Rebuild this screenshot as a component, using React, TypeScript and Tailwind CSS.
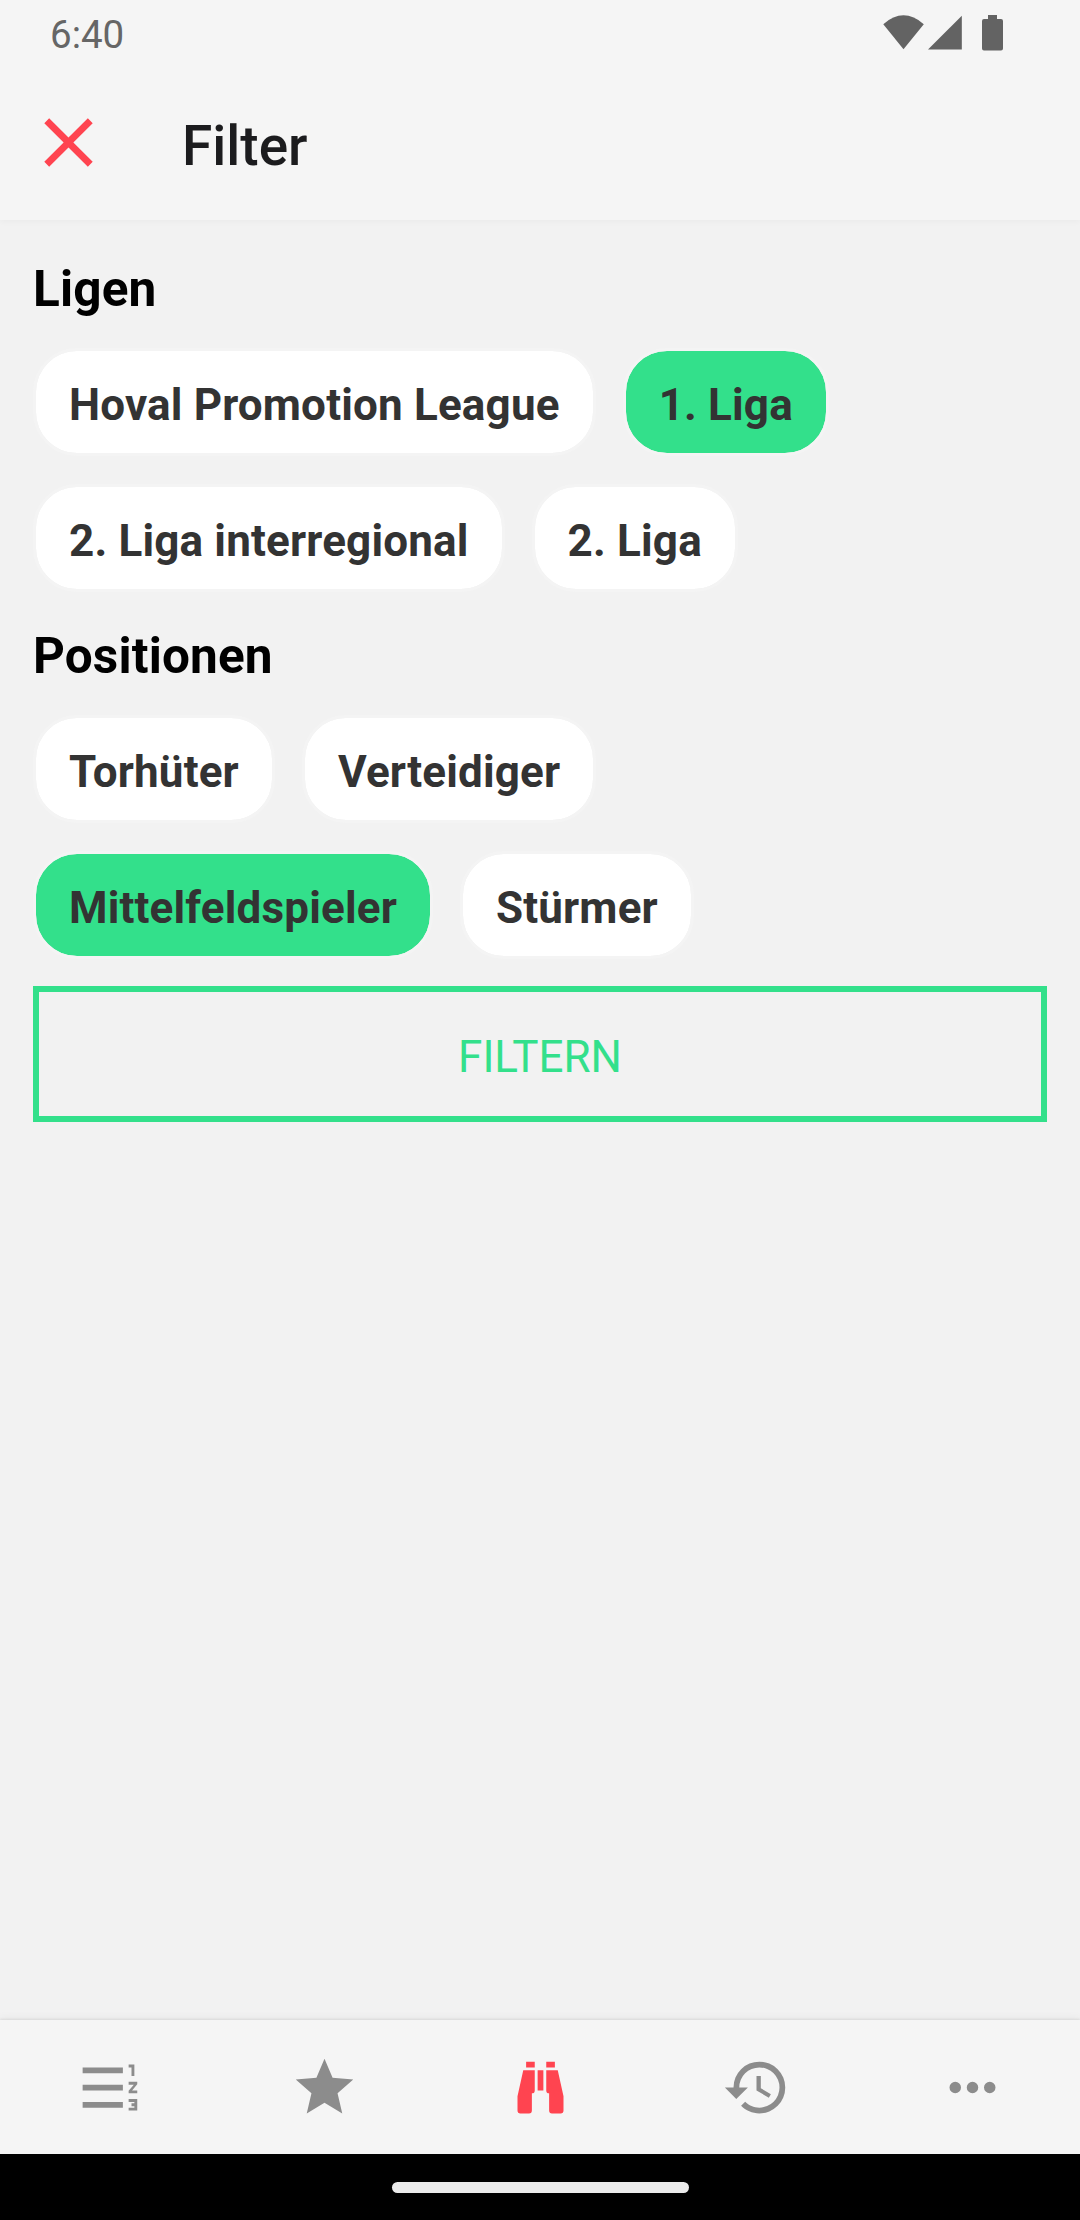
import React from "react";

type ChipProps = { label: string; selected?: boolean };

function Chip({ label, selected = false }: ChipProps) {
  return (
    <button
      className={
        "h-[108px] shrink-0 whitespace-nowrap rounded-[44px] border-[3px] border-[#f4f4f4] bg-clip-padding px-[33px] pt-[28px] pb-[22px] text-[44px] leading-[52px] font-bold tracking-[0.17px] text-[#333333] " +
        (selected ? "bg-[#33e08b]" : "bg-white")
      }
    >
      {label}
    </button>
  );
}

function Section({ title, rows }: { title: string; rows: ChipProps[][] }) {
  return (
    <section>
      <h2 className="text-[49.5px] leading-[58px] font-bold tracking-[0.17px] text-black">{title}</h2>
      <div className="mt-[30px] flex flex-col gap-7">
        {rows.map((row, i) => (
          <div key={i} className="flex gap-[27px]">
            {row.map((chip) => (
              <Chip key={chip.label} {...chip} />
            ))}
          </div>
        ))}
      </div>
    </section>
  );
}

const tabs = [
  {
    name: "Tabelle",
    d: "M19 17h2v.5h-1v1h1v.5h-2v1h3v-4h-3v1zm1-9h1V4h-2v1h1v3zm-1 3h1.8L19 13.1v.9h3v-1h-1.8l1.8-2.1V10h-3v1zM3 5h14v2H3V5zm0 12h14v2H3v-2zm0-6h14v2H3v-2z",
  },
  {
    name: "Favoriten",
    d: "M12 17.27L18.18 21l-1.64-7.03L22 9.24l-7.19-.61L12 2 9.19 8.63 2 9.24l5.46 4.73L5.82 21z",
  },
  {
    name: "Scouting",
    active: true,
    d: "M11 6h2v7h-2V6M9 20a1 1 0 0 1-1 1H5a1 1 0 0 1-1-1v-5L6 6h4v7a1 1 0 0 1-1 1v6M10 5H7V3h3v2M15 20v-6a1 1 0 0 1-1-1V6h4l2 9v5a1 1 0 0 1-1 1h-3a1 1 0 0 1-1-1M14 5V3h3v2h-3z",
  },
  {
    name: "Verlauf",
    d: "M13.5 8H12v5l4.28 2.54.72-1.21-3.5-2.08V8M13 3a9 9 0 0 0-9 9H1l3.96 4.03L9 12H6a7 7 0 0 1 7-7 7 7 0 0 1 7 7 7 7 0 0 1-7 7c-1.93 0-3.68-.79-4.94-2.06l-1.42 1.42C8.27 20 10.5 21 13 21a9 9 0 0 0 9-9 9 9 0 0 0-9-9",
  },
  {
    name: "Mehr",
    d: "M16 12a2 2 0 1 1 4 0 2 2 0 0 1-4 0M10 12a2 2 0 1 1 4 0 2 2 0 0 1-4 0M4 12a2 2 0 1 1 4 0 2 2 0 0 1-4 0z",
  },
];

export default function App() {
  return (
    <div className="flex h-[2220px] w-[1080px] flex-col overflow-hidden bg-[#f2f2f2] font-['Roboto',sans-serif]">
      <header className="h-[220px] shrink-0 bg-[#f5f5f5] shadow-[0_2px_6px_rgba(0,0,0,0.03)]">
        <div className="flex h-[66px] items-start justify-between pl-[50px] pr-[76px]">
          <span className="pt-[12px] text-[38.5px] leading-[45px] text-[#666666]">6:40</span>
          <svg className="mt-[14px] h-[38px] w-[122px]" viewBox="882 14 122 38" fill="#636363">
            <path d="M883.3 24.2Q903.5 6.5 923.8 24.2L903.5 49.3z" />
            <path d="M961.8 15.8V49.5H928z" />
            <path d="M988 15h9v4h4a2 2 0 0 1 2 2v27.500a2 2 0 0 1-2 2h-17a2 2 0 0 1-2-2V21a2 2 0 0 1 2-2h4z" />
          </svg>
        </div>
        <div className="flex h-[154px] items-start pl-[27px]">
          <svg className="mt-[35px] h-[83px] w-[83px]" viewBox="0 0 24 24" fill="#ff4450" aria-label="Schliessen">
            <path d="M19 6.410L17.590 5 12 10.590 6.410 5 5 6.410 10.590 12 5 17.590 6.410 19 12 13.410 17.590 19 19 17.590 13.410 12z" />
          </svg>
          <h1 className="ml-[72px] mt-[48px] text-[55px] leading-[64px] font-medium text-[#1c1c1e]">Filter</h1>
        </div>
      </header>

      <main className="flex flex-1 flex-col px-[33px] pt-[40px]">
        <div className="flex flex-col gap-[35px]">
          <Section
            title="Ligen"
            rows={[
              [{ label: "Hoval Promotion League" }, { label: "1. Liga", selected: true }],
              [{ label: "2. Liga interregional" }, { label: "2. Liga" }],
            ]}
          />
          <Section
            title="Positionen"
            rows={[
              [{ label: "Torhüter" }, { label: "Verteidiger" }],
              [{ label: "Mittelfeldspieler", selected: true }, { label: "Stürmer" }],
            ]}
          />
        </div>
        <button className="mt-[27px] h-[136px] border-[6px] border-[#33e08b] pt-[6px] text-[44px] leading-[52px] text-[#33e08b]">
          FILTERN
        </button>
      </main>

      <nav className="grid h-[134px] shrink-0 grid-cols-5 place-items-center bg-[#f5f5f5] shadow-[0_-1px_2px_rgba(0,0,0,0.08),0_-3px_8px_rgba(0,0,0,0.04)]">
        {tabs.map((tab) => (
          <svg
            key={tab.name}
            aria-label={tab.name}
            className={"h-[69px] w-[69px] " + (tab.active ? "fill-[#ff4450]" : "fill-[#8c8c8c]")}
            viewBox="0 0 24 24"
          >
            <path d={tab.d} />
          </svg>
        ))}
      </nav>
      <div className="flex h-[66px] shrink-0 items-center justify-center bg-black">
        <div className="h-[11px] w-[297px] rounded-full bg-[#ebebeb]" />
      </div>
    </div>
  );
}
